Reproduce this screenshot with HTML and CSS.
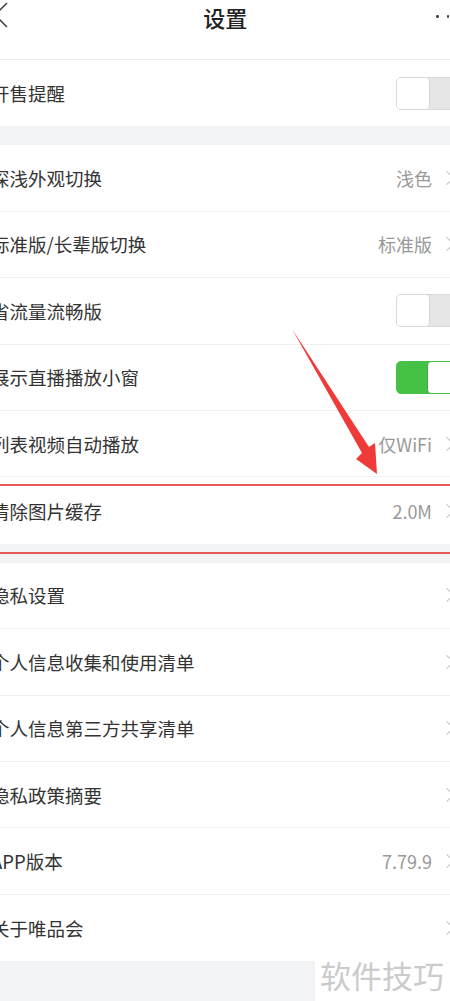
FILE: index.html
```html
<!DOCTYPE html>
<html lang="zh-CN">
<head>
  <meta charset="UTF-8">
  <title>设置</title>
  <meta name="viewport" content="width=device-width, initial-scale=1">
  <link rel="stylesheet" href="styles.css">
</head>
<body>
  <div class="screen">
    <!-- Top bar -->
    <div class="top-bar">
      <svg class="back-icon" width="16" height="28" viewBox="0 0 16 28">
        <polyline points="15,2 3,14 15,26" fill="none" stroke="#333" stroke-width="1.4"/>
      </svg>
      <div class="top-title">设置</div>
      <div class="more-dots"><span></span><span></span><span></span></div>
    </div>

    <div class="group">
      <div class="row">
        <div class="row-label">开售提醒</div>
        <div class="switch"><span class="knob"></span></div>
      </div>
    </div>

    <div class="group">
      <div class="row">
        <div class="row-label">深浅外观切换</div>
        <div class="row-value">浅色</div>
        <span class="chevron"></span>
      </div>
      <div class="row">
        <div class="row-label">标准版/长辈版切换</div>
        <div class="row-value">标准版</div>
        <span class="chevron"></span>
      </div>
      <div class="row">
        <div class="row-label">省流量流畅版</div>
        <div class="switch"><span class="knob"></span></div>
      </div>
      <div class="row">
        <div class="row-label">展示直播播放小窗</div>
        <div class="switch on"><span class="knob"></span></div>
      </div>
      <div class="row">
        <div class="row-label">列表视频自动播放</div>
        <div class="row-value">仅WiFi</div>
        <span class="chevron"></span>
      </div>
      <div class="row">
        <div class="row-label">清除图片缓存</div>
        <div class="row-value">2.0M</div>
        <span class="chevron"></span>
      </div>
    </div>

    <div class="group">
      <div class="row">
        <div class="row-label">隐私设置</div>
        <span class="chevron"></span>
      </div>
      <div class="row">
        <div class="row-label">个人信息收集和使用清单</div>
        <span class="chevron"></span>
      </div>
      <div class="row">
        <div class="row-label">个人信息第三方共享清单</div>
        <span class="chevron"></span>
      </div>
      <div class="row">
        <div class="row-label">隐私政策摘要</div>
        <span class="chevron"></span>
      </div>
      <div class="row">
        <div class="row-label">APP版本</div>
        <div class="row-value">7.79.9</div>
        <span class="chevron"></span>
      </div>
      <div class="row">
        <div class="row-label">关于唯品会</div>
        <span class="chevron"></span>
      </div>
    </div>
  </div>

  <!-- Annotation overlays -->
  <div class="mark-line top"></div>
  <div class="mark-line bottom"></div>
  <svg class="mark-arrow" width="450" height="1001" viewBox="0 0 450 1001">
    <polygon points="292,329 369,447 375,443 377,474 356,459 362,453" fill="#f03a3a"/>
  </svg>
  <div class="watermark">软件技巧</div>
</body>
</html>
```

FILE: styles.css
```css
html, body {
  margin: 0;
  height: 1001px;
  overflow: hidden;
}
body {
  position: relative;
  background: #f2f3f5;
  font-family: "Noto Sans CJK SC", "Noto Sans", sans-serif;
  color: #333;
}
.screen {
  width: 490px;
  margin-left: -20px;
}
.top-bar {
  height: 60px;
  background: #fff;
  border-bottom: 1px solid #ececec;
  display: flex;
  align-items: flex-start;
  justify-content: space-between;
  box-sizing: border-box;
  padding: 1px 10px 0 12px;
}
.top-title {
  font-size: 22px;
  font-weight: 500;
  line-height: 32px;
  color: #222;
  padding-left: 6px;
}
.more-dots {
  display: flex;
  gap: 8px;
  padding-top: 14px;
}
.more-dots span {
  width: 2.5px;
  height: 2.5px;
  background: #444;
  border-radius: 50%;
}
.group {
  background: #fff;
  margin-bottom: 19px;
}
.row {
  height: 66.4px;
  box-sizing: border-box;
  display: flex;
  align-items: center;
  padding: 0 16px 0 11px;
  border-bottom: 1px solid #efefef;
}
.row:last-child {
  border-bottom: none;
}
.row-label {
  flex: 1;
  font-size: 18.5px;
}
.row-value {
  font-size: 18px;
  color: #999;
  margin-right: 10px;
}
.chevron {
  width: 9px;
  height: 9px;
  border-top: 1.3px solid #bdbdbd;
  border-right: 1.3px solid #bdbdbd;
  transform: rotate(45deg);
  margin-right: 2px;
}
.switch {
  width: 62px;
  height: 33px;
  box-sizing: border-box;
  border-radius: 5px;
  background: #e6e6e6;
  border: 1px solid #d9d9d9;
  display: flex;
  margin-right: -4px;
}
.switch .knob {
  width: 33px;
  height: 100%;
  box-sizing: border-box;
  background: #fff;
  border-right: 1px solid #d6d6d6;
  border-radius: 4px;
}
.switch.on {
  background: #45c146;
  border-color: #45c146;
  justify-content: flex-end;
}
.switch.on .knob {
  width: 30px;
  border-right: none;
  border-left: 1px solid #3cad3d;
}
.mark-line {
  position: absolute;
  left: 0;
  width: 450px;
  height: 2px;
  background: #e45a5a;
}
.mark-line.top {
  top: 484px;
}
.mark-line.bottom {
  top: 552px;
}
.mark-arrow {
  position: absolute;
  top: 0;
  left: 0;
}
.watermark {
  position: absolute;
  left: 315px;
  top: 960px;
  width: 135px;
  height: 41px;
  background: #fff;
  font-size: 31px;
  line-height: 30px;
  color: #cbcbcb;
  padding-left: 5px;
  box-sizing: border-box;
}
```
